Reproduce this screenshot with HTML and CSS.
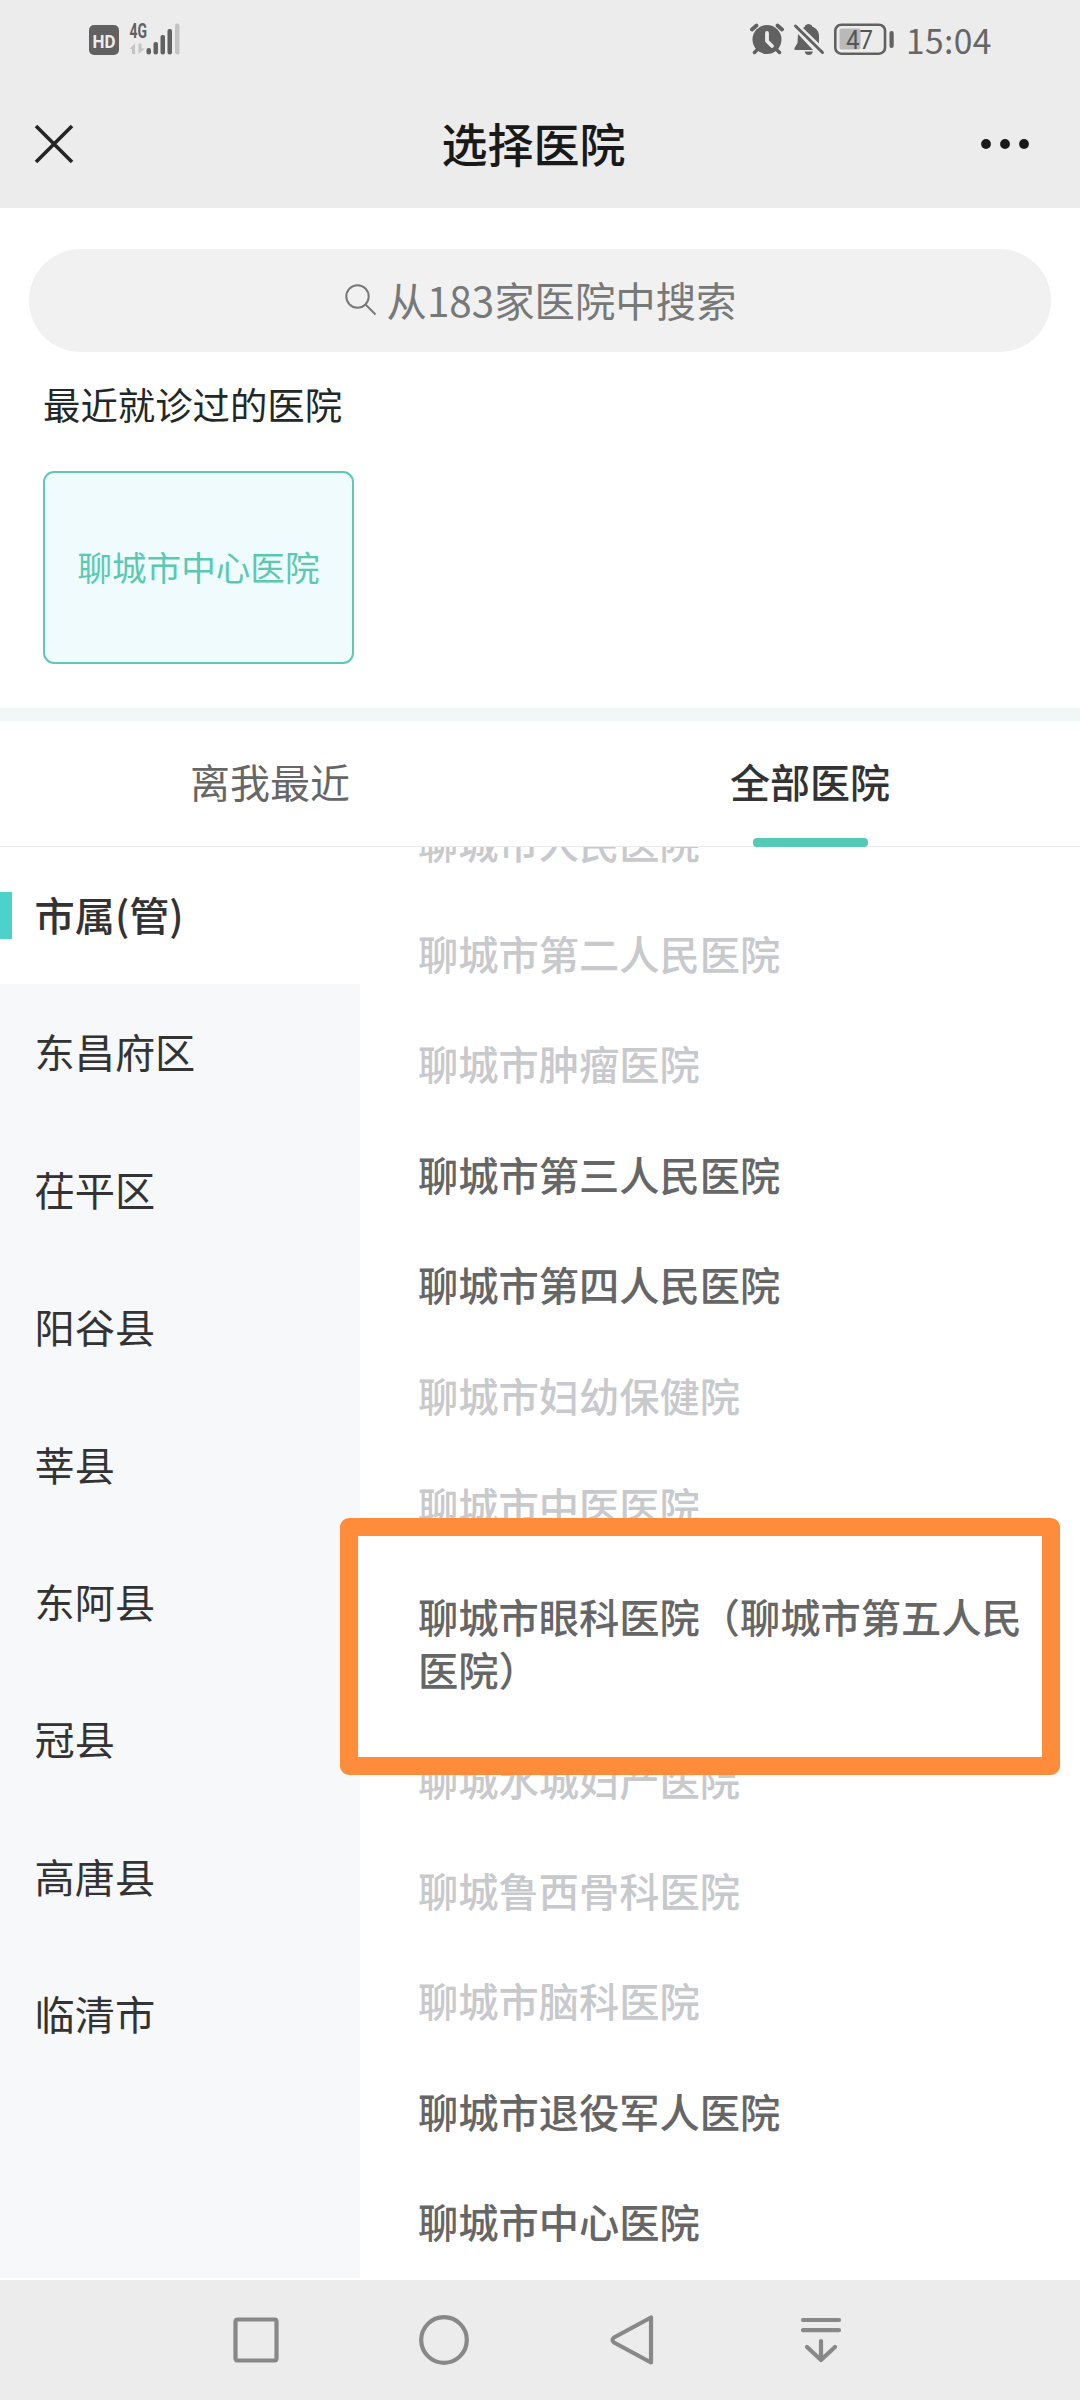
FILE: index.html
```html
<!DOCTYPE html>
<html lang="zh-CN">
<head>
<meta charset="utf-8">
<title>选择医院</title>
<link rel="stylesheet" href="styles.css">
</head>
<body>
<div class="screen">
  <div class="status">
    <svg class="status-left" width="100" height="40" viewBox="0 0 100 40">
      <rect x="3" y="5" width="30" height="30" rx="5" fill="#616161"/>
      <text x="18" y="27.5" class="hd" text-anchor="middle" textLength="23" lengthAdjust="spacingAndGlyphs">HD</text>
      <text x="43.5" y="17.5" class="net" textLength="17.5" lengthAdjust="spacingAndGlyphs">4G</text>
      <path d="M43.5 29 49 23.5V34h-3v-5zM52.500 23.500h3V28.500H59L52.500 34z" fill="#c4c4c4"/>
      <g fill="#616161">
        <rect x="60.500" y="28" width="4.500" height="6.500" rx="2.200"/>
        <rect x="67.500" y="22" width="4.500" height="12.500" rx="2"/>
        <rect x="74.500" y="15" width="4.500" height="19.500" rx="2"/>
        <rect x="81.500" y="9" width="4.500" height="25.500" rx="2"/>
      </g>
      <rect x="89" y="3.500" width="4.500" height="31" rx="2" fill="#c4c4c4"/>
    </svg>
    <div class="status-right">
      <svg width="34" height="32" viewBox="0 0 34 32">
        <circle cx="17" cy="16.500" r="14.500" fill="#616161"/>
        <path d="M2 6.500 6.500 2.500M27.500 2.500 32 6.500" stroke="#616161" stroke-width="3.800" stroke-linecap="round"/>
        <path d="M4.500 29.500 8 26M29.500 29.500 26 26" stroke="#616161" stroke-width="3.500" stroke-linecap="round"/>
        <path d="M17 10v8l5 5" fill="none" stroke="#ececec" stroke-width="3.800" stroke-linecap="round" stroke-linejoin="round"/>
      </svg>
      <svg class="bell" width="32" height="32" viewBox="0 0 32 32">
        <path d="M5 11 20 27H1.500V25L4.500 20zM10 5 12 3.500V2.500Q15.500-.5 19 2.500V3.500C24 5.500 26 9 26 13V20.500zM11.500 28.500H20Q19 32 15.800 32T11.500 28.500z" fill="#616161"/>
        <path d="M2.500 3 29.500 29.500" stroke="#616161" stroke-width="3" stroke-linecap="round"/>
      </svg>
      <svg class="battery" width="60" height="33" viewBox="0 0 60 33">
        <rect x="1.300" y="1.700" width="49.700" height="29" rx="6" fill="none" stroke="#616161" stroke-width="2.600"/>
        <rect x="5.500" y="5.500" width="21" height="21" rx="2" fill="#b9b9b9"/>
        <rect x="55.500" y="8" width="4.200" height="17" rx="2" fill="#616161"/>
        <text x="25.500" y="25.500" class="charge" text-anchor="middle" textLength="27" lengthAdjust="spacingAndGlyphs">47</text>
      </svg>
      <span class="time">15:04</span>
    </div>
  </div>
  <header class="header">
    <svg width="40" height="40" viewBox="0 0 40 40"><path d="M2 2 38 38M38 2 2 38" stroke="#252525" stroke-width="3.600"/></svg>
    <h1 class="title">选择医院</h1>
    <svg width="50" height="12" viewBox="0 0 50 12" fill="#191919"><circle cx="6" cy="6" r="4.900"/><circle cx="25" cy="6" r="4.900"/><circle cx="44" cy="6" r="4.900"/></svg>
  </header>
  <section class="finder">
    <div class="search">
      <svg width="32" height="32" viewBox="0 0 32 32" fill="none" stroke="#777979" stroke-width="2"><circle cx="12.500" cy="12.500" r="11.200"/><path d="M20.500 20.500 30.500 30.500"/></svg>
      <span>从183家医院中搜索</span>
    </div>
    <h2 class="recent-title">最近就诊过的医院</h2>
    <div class="recent-card">聊城市中心医院</div>
  </section>
  <nav class="tabs">
    <div class="tab">离我最近</div>
    <div class="tab tab-active">全部医院</div>
  </nav>
  <main class="content">
    <aside class="areas">
      <div class="area area-active">市属(管)</div>
      <div class="area">东昌府区</div>
      <div class="area">茌平区</div>
      <div class="area">阳谷县</div>
      <div class="area">莘县</div>
      <div class="area">东阿县</div>
      <div class="area">冠县</div>
      <div class="area">高唐县</div>
      <div class="area">临清市</div>
    </aside>
    <div class="hospitals">
      <div class="hospital off">聊城市人民医院</div>
      <div class="hospital off">聊城市第二人民医院</div>
      <div class="hospital off">聊城市肿瘤医院</div>
      <div class="hospital">聊城市第三人民医院</div>
      <div class="hospital">聊城市第四人民医院</div>
      <div class="hospital off">聊城市妇幼保健院</div>
      <div class="hospital off">聊城市中医医院</div>
      <div class="hospital marked">聊城市眼科医院（聊城市第五人民医院）</div>
      <div class="hospital off">聊城水城妇产医院</div>
      <div class="hospital off">聊城鲁西骨科医院</div>
      <div class="hospital off">聊城市脑科医院</div>
      <div class="hospital">聊城市退役军人医院</div>
      <div class="hospital">聊城市中心医院</div>
    </div>
  </main>
  <footer class="softkeys">
    <svg viewBox="0 0 54 54"><rect x="6.500" y="6.500" width="41" height="41" rx="2"/></svg>
    <svg viewBox="0 0 54 54"><circle cx="27" cy="27" r="22.800"/></svg>
    <svg viewBox="0 0 54 54"><path d="M45 4.500V49.500L8 29.500Q5 27 8 24.500Z"/></svg>
    <svg viewBox="0 0 54 54"><path d="M9 7H45M9 17.200H45M27 28V47M13 34 27 47 41 34"/></svg>
  </footer>
</div>
</body>
</html>
```
FILE: styles.css
```css
*, *::before, *::after { box-sizing: border-box; }
body {
  margin: 0;
  background: #fff;
  font-family: "Noto Sans CJK SC", sans-serif;
  color: #333;
}
.screen {
  width: 1080px;
  height: 2400px;
  display: flex;
  flex-direction: column;
  overflow: hidden;
}
svg { display: block; flex: none; }

.status {
  height: 80px;
  flex: none;
  background: #ececec;
  display: flex;
  justify-content: space-between;
  padding: 20px 90px 0 86px;
}
.status-right {
  display: flex;
  align-items: flex-start;
  padding-top: 3px;
}
.bell { margin-left: 9px; }
.battery { margin-left: 9px; }
.hd { font: 700 19px Roboto, sans-serif; fill: #ececec; }
.net { font: 700 20px Roboto, sans-serif; fill: #616161; }
.charge { font: 400 26px Roboto, sans-serif; fill: #555; }
.time {
  width: 84px;
  margin-left: 12px;
  font: 400 33.5px/34px "Noto Sans CJK SC", sans-serif;
  color: #666;
  letter-spacing: 0.4px;
  white-space: nowrap;
}

.header {
  height: 128px;
  flex: none;
  background: #ececec;
  display: flex;
  align-items: center;
  justify-content: space-between;
  padding: 0 50px 0 34px;
}
.header svg { margin-bottom: 1px; }
.header svg:first-child { margin-right: 13px; }
.title {
  margin: 0 0 4px;
  font-size: 46px;
  line-height: 60px;
  font-weight: 500;
  color: #191919;
}

.finder {
  height: 513px;
  flex: none;
  padding: 41px 29px 0;
  border-bottom: 13px solid #f1f7f7;
}
.search {
  height: 103px;
  border-radius: 52px;
  background: #f1f1f1;
  display: flex;
  align-items: center;
  justify-content: center;
  gap: 10px;
  padding: 0 0 1px 1px;
  font-size: 40.4px;
  line-height: 60px;
  color: #777979;
}
.search span { margin-bottom: 1px; }
.recent-title {
  margin: 25px 0 0 14px;
  font-size: 37.4px;
  line-height: 54px;
  font-weight: 400;
  color: #222826;
}
.recent-card {
  width: 311px;
  height: 193px;
  margin: 40px 0 0 14px;
  padding-bottom: 4px;
  border: 2px solid #60c7b3;
  border-radius: 11px;
  background: #effbfc;
  color: #5bc9b2;
  font-size: 34.6px;
  display: flex;
  align-items: center;
  justify-content: center;
}

.tabs {
  height: 126px;
  flex: none;
  display: grid;
  grid-template-columns: 1fr 1fr;
  border-bottom: 1px solid #ebebeb;
}
.tab {
  position: relative;
  text-align: center;
  font-size: 40px;
  line-height: 120px;
  color: #666;
}
.tab-active { color: #333; font-weight: 500; }
.tab-active::after {
  content: "";
  position: absolute;
  left: 212.5px;
  bottom: -1px;
  width: 115px;
  height: 9px;
  border-radius: 4px;
  background: #54c9b6;
}

.content {
  height: 1433px;
  flex: none;
  display: flex;
  overflow: hidden;
}
.areas {
  width: 360px;
  height: 1431px;
  background: #f7f8fa;
}
.area {
  height: 137.4px;
  padding-left: 34.5px;
  font-size: 40.2px;
  line-height: 133.6px;
}
.area-active {
  position: relative;
  background: #fff;
  font-weight: 500;
}
.area-active::before {
  content: "";
  position: absolute;
  left: 0;
  top: 45px;
  width: 12px;
  height: 47px;
  background: #4dd1cb;
}
.hospitals {
  flex: 1;
  padding-left: 58px;
  margin-top: -32px;
}
.hospital {
  width: 610px;
  margin-bottom: 57.1px;
  font-size: 40.25px;
  line-height: 53.4px;
  font-weight: 500;
  color: #666;
}
.off { color: #c8c9cc; }
.marked { position: relative; }
/* frame drawn over the neighbouring rows */
.marked::after {
  content: "";
  position: absolute;
  left: -78px;
  top: -70.5px;
  width: 720px;
  height: 257px;
  border: 18px solid #ff8c3b;
  border-radius: 9px;
}

.softkeys {
  height: 120px;
  flex: none;
  background: #ececec;
  display: flex;
  justify-content: space-between;
  padding: 33px 232px 0 229px;
}
.softkeys svg {
  width: 54px;
  height: 54px;
  fill: none;
  stroke: #888;
  stroke-width: 4.2;
  stroke-linecap: round;
  stroke-linejoin: round;
}
```
